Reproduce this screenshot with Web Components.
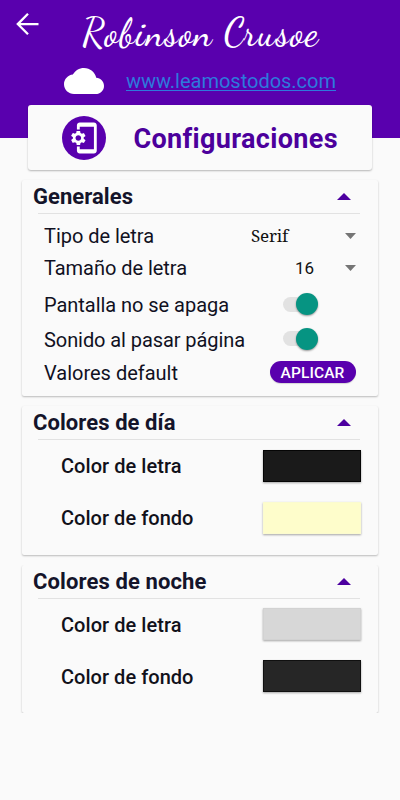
<!DOCTYPE html>
<html lang="es">
<head>
<meta charset="utf-8">
<title>Configuraciones</title>
<style>
html,body{margin:0;height:100%;background:#fafafa}
body{font-family:Roboto,"Liberation Sans",sans-serif;color:#11111f;overflow:hidden}
</style>
</head>
<body>
<settings-page></settings-page>
<script>
function define(name, html, init) {
  const t = document.createElement('template');
  t.innerHTML = html;
  customElements.define(name, class extends HTMLElement {
    connectedCallback() {
      if (this.shadowRoot) return;
      this.attachShadow({mode: 'open'}).appendChild(t.content.cloneNode(true));
      if (init) init(this, this.shadowRoot);
    }
  });
}

/* Single line of text, tracked so that it spans a given width. */
define('fit-text', `<style>:host{display:inline-block;white-space:nowrap}span{display:inline-block}</style><span><slot></slot></span>`, (el, root) => {
  const s = root.querySelector('span');
  const w = parseFloat(el.getAttribute('width'));
  const n = el.textContent.length;
  if (w) s.style.letterSpacing = ((w - s.getBoundingClientRect().width) / n) + 'px';
});

define('back-arrow', `<style>:host{display:block;width:24px;height:24px}svg{display:block}</style>
<svg width="24" height="24" viewBox="0 0 24 24" fill="none" stroke="#fff" stroke-width="2.3"><path d="M13 1.8 2.8 12.1l10.2 10.1M2.8 12.1H23.5"/></svg>`);

define('cloud-icon', `<style>:host{display:block;width:40px;height:26px}svg{display:block}</style>
<svg width="40" height="26" viewBox="0 4 24 16" preserveAspectRatio="none" fill="#fff"><path d="M19.35 10.04C18.67 6.59 15.64 4 12 4 9.11 4 6.6 5.64 5.35 8.04 2.34 8.36 0 10.91 0 14c0 3.31 2.69 6 6 6h13c2.76 0 5-2.24 5-5 0-2.64-2.05-4.78-4.65-4.96z"/></svg>`);

define('app-header', `<style>
:host{display:block;height:138px;background:#5900ae;box-sizing:border-box;padding-top:7px}
.top{display:grid;grid-template-columns:82px 1fr;height:54px}
back-arrow{margin:5px 0 0 15px}
.title{color:#fff;font:500 38px/52px "Dancing Script","Liberation Serif",serif}
.web{display:flex;align-items:center;padding-left:63.5px;height:40px;gap:22.5px}
.web a{color:#2e79dc;font-size:20px;line-height:24px;display:block;height:22px}
.web fit-text{display:block;height:21px;box-shadow:0 1px #2e79dc;margin-top:-1px}
.web fit-text{line-height:26px;height:22px;margin-top:-2px}
</style>
<div class="top"><back-arrow></back-arrow><div class="title"><fit-text width="237">Robinson Crusoe</fit-text></div></div>
<div class="web"><cloud-icon></cloud-icon><a><fit-text width="210">www.leamostodos.com</fit-text></a></div>`);

define('title-card', `<style>
:host{display:flex;position:relative;box-sizing:border-box;width:344px;height:65px;margin:-33px 0 0 28px;background:#fafafa;border-radius:3px;box-shadow:0 1px 2px rgba(0,0,0,.28);padding-left:33.5px;align-items:center}
.disc{width:44px;height:44px;border-radius:50%;background:#5900ae;display:grid;place-items:center}
.name{color:#4c009c;font-weight:700;font-size:27px;line-height:32px;margin:3px 0 0 28px}
svg{display:block}
</style>
<div class="disc"><svg width="34" height="34" viewBox="0 0 24 24" fill="#fff"><path d="M11.8 12.5v-1l1.1-.8c.1-.1.1-.2.1-.3l-1-1.7c-.1-.1-.2-.2-.3-.1l-1.3.4c-.3-.2-.6-.4-.9-.5l-.2-1.3c0-.1-.1-.2-.3-.2H7c-.1 0-.2.1-.3.2l-.2 1.3c-.3.1-.6.3-.9.5l-1.3-.5c-.1 0-.2 0-.3.1l-1 1.7c-.1.1 0 .2.1.3l1.1.8v1l-1.1.8c-.1.2-.1.3-.1.4l1 1.7c.1.1.2.2.3.1l1.4-.4c.3.2.6.4.9.5l.2 1.3c-.1.1.1.2.2.2h2c.1 0 .2-.1.3-.2l.2-1.3c.3-.1.6-.3.9-.5l1.3.5c.1 0 .2 0 .3-.1l1-1.7c.1-.1 0-.2-.1-.3l-1.1-.9zM8 14c-1.1 0-2-.9-2-2s.9-2 2-2 2 .9 2 2-.9 2-2 2zM19 1H9c-1.1 0-2 .9-2 2v3h2V4h10v16H9v-2H7v3c0 1.1.9 2 2 2h10c1.1 0 2-.9 2-2V3c0-1.1-.9-2-2-2z"/></svg></div>
<div class="name"><slot></slot></div>`);

define('settings-card', `<style>
:host{display:block;box-sizing:border-box;width:356px;margin:10px 0 0 22px;background:#fafafa;border-radius:2px;box-shadow:0 1px 2px rgba(0,0,0,.26)}
:host([cut]){clip-path:inset(0 -4px 0 -4px)}
.head{display:flex;justify-content:space-between;align-items:center;box-sizing:border-box;height:33px;padding:0 27px 0 11px;font-weight:700;font-size:22px;line-height:32px;color:#14142a}
svg{display:block}
hr{border:0;height:1px;margin:0 18px 0 16px;background:#e2e2e2}
</style>
<div class="head"><slot name="title"></slot><svg width="14" height="7" viewBox="0 0 14 7"><path d="M0 7 7 0l7 7z" fill="#4d00a0"/></svg></div><hr><slot></slot>`);

define('setting-row', `<style>
:host{display:flex;justify-content:space-between;align-items:center;padding:0 22px 0 22px;font-size:20px;line-height:24px}
</style><slot name="label"></slot><slot></slot>`);

define('select-box', `<style>
:host{display:flex;align-items:center;font-size:17px;color:#111}
svg{display:block}
</style><slot></slot><svg width="11" height="6" viewBox="0 0 11 6"><path d="M0 0h11L5.5 6z" fill="#757575"/></svg>`);

define('toggle-switch', `<style>
:host{display:grid;align-items:center;width:35px;height:22px;margin:-2px 38px 0 0}
b,i{grid-area:1/1;display:block}
b{width:28px;height:15px;border-radius:8px;background:#e2e2e2}
i{justify-self:end;width:22px;height:22px;border-radius:50%;background:#069482;box-shadow:0 1px 2px rgba(0,0,0,.4)}
</style><b></b><i></i>`);

define('pill-button', `<style>
:host{display:grid;place-items:center;box-sizing:border-box;width:86px;height:22px;margin:-2px .5px 0 0;border-radius:11px;background:#5900ae;color:#fff;font-weight:500;font-size:15.5px;line-height:24px;box-shadow:0 1px 1px rgba(0,0,0,.15)}
</style><slot></slot>`);

define('color-row', `<style>
:host{display:flex;justify-content:space-between;align-items:center;height:52px;padding:0 17px 0 39px;font-weight:500;font-size:20px;line-height:24px;color:#11111a}
i{box-sizing:border-box;width:98px;height:32px;margin-bottom:var(--lift,0);background:var(--swatch);border:1px solid var(--edge);box-shadow:0 1px 2px rgba(0,0,0,.35)}
</style><slot></slot><i></i>`);

define('settings-page', `<style>
:host{display:block;width:400px;height:800px;background:#fafafa}
.general{height:216px}
.day{height:149px}
.night{height:148px;--lift:2px}
.space{height:5.5px}
.h32{height:32px}.h43{height:43px}.h26{height:26px}.h40{height:40px}
.font{font-family:"Noto Serif","Droid Serif","DejaVu Serif",serif;gap:57px}
.size{gap:31px}
</style>
<app-header></app-header>
<title-card><fit-text width="204">Configuraciones</fit-text></title-card>
<settings-card class="general">
<fit-text slot="title" width="100">Generales</fit-text>
<div class="space"></div>
<setting-row class="h32"><fit-text slot="label" width="110">Tipo de letra</fit-text><select-box class="font"><fit-text width="37">Serif</fit-text></select-box></setting-row>
<setting-row class="h32"><fit-text slot="label" width="143">Tamaño de letra</fit-text><select-box class="size"><fit-text width="19">16</fit-text></select-box></setting-row>
<setting-row class="h43"><fit-text slot="label" width="185">Pantalla no se apaga</fit-text><toggle-switch></toggle-switch></setting-row>
<setting-row class="h26"><fit-text slot="label" width="201">Sonido al pasar página</fit-text><toggle-switch></toggle-switch></setting-row>
<setting-row class="h40"><fit-text slot="label" width="134">Valores default</fit-text><pill-button><fit-text width="64">APLICAR</fit-text></pill-button></setting-row>
</settings-card>
<settings-card class="day">
<fit-text slot="title" width="142.5">Colores de día</fit-text>
<color-row style="--swatch:#1a1a1a;--edge:#050505"><fit-text width="120.5">Color de letra</fit-text></color-row>
<color-row style="--swatch:#fefdcb;--edge:#fbfbcf"><fit-text width="132.5">Color de fondo</fit-text></color-row>
</settings-card>
<settings-card class="night" cut>
<fit-text slot="title" width="173.5">Colores de noche</fit-text>
<color-row style="--swatch:#d7d7d7;--edge:#d2d2d2"><fit-text width="120.5">Color de letra</fit-text></color-row>
<color-row style="--swatch:#262626;--edge:#101010"><fit-text width="132.5">Color de fondo</fit-text></color-row>
</settings-card>`);
</script>
</body>
</html>
